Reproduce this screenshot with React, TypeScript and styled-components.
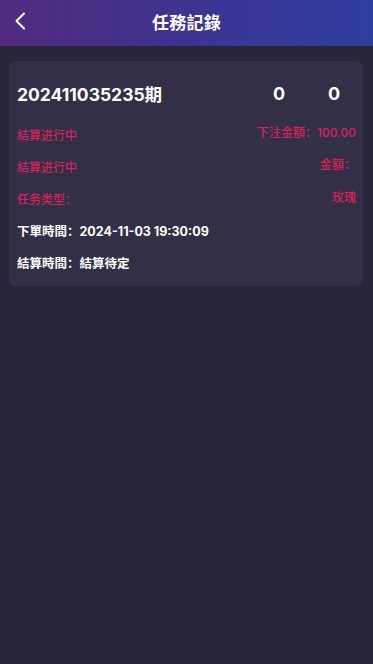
import React from "react";
import styled, { createGlobalStyle } from "styled-components";

const Global = createGlobalStyle`
  html, body { margin: 0; padding: 0; background: #29253a; }
  body { font-family: Inter, "Noto Sans CJK SC", sans-serif; -webkit-font-smoothing: antialiased; }
  #root { min-height: 664px; background: #29253a; }
`;

const Page = styled.div`
  min-height: 664px;
  background: #29253a;
  display: flex;
  flex-direction: column;
`;

const Header = styled.header`
  height: 46px;
  background: linear-gradient(90deg, #532b7e 0%, #3d3490 50%, #2e3ea0 100%);
  display: flex;
  align-items: center;
  justify-content: center;
  position: relative;
`;

const Back = styled.button`
  position: absolute;
  left: 10px;
  top: 10px;
  width: 20px;
  height: 22px;
  border: 0;
  padding: 0;
  background: transparent;
  display: flex;
  align-items: center;
  justify-content: center;
`;

const Title = styled.h1`
  margin: 0;
  margin-top: -4px;
  color: #fff;
  font-size: 17px;
  font-weight: 700;
  letter-spacing: 0.2px;
`;

const Content = styled.main`
  padding: 15px 10px 0 9px;
`;

const Card = styled.section`
  background: #332f47;
  border-radius: 6px;
  padding: 20px 7px 8px 8px;
  display: flex;
  flex-direction: column;
`;

const TitleRow = styled.div`
  display: flex;
  align-items: center;
  height: 24px;
  margin-bottom: 13px;
`;

const Period = styled.div`
  flex: 1;
  color: #fff;
  font-size: 17.5px;
  font-weight: 700;
`;

const Score = styled.div`
  width: 44px;
  text-align: center;
  color: #fff;
  font-size: 18px;
  font-weight: 700;
  & + & { margin-left: 11px; }
`;

const Row = styled.div`
  display: flex;
  align-items: center;
  justify-content: space-between;
  height: 32px;
`;

const Pink = styled.span<{ $up?: number }>`
  color: #d6235e;
  font-size: 12px;
  font-weight: 500;
  position: relative;
  top: ${(p) => (p.$up ? -p.$up : 0)}px;
`;

const Info = styled.span`
  color: #fff;
  font-size: 12.5px;
  font-weight: 700;
`;

export default function App() {
  return (
    <Page>
      <Global />
      <Header>
        <Back aria-label="back">
          <svg width="12" height="18" viewBox="0 0 12 18" fill="none">
            <path d="M10 1.5 L2.5 9 L10 16.5" stroke="#fff" strokeWidth="2" strokeLinecap="round" strokeLinejoin="round" />
          </svg>
        </Back>
        <Title>任務記錄</Title>
      </Header>
      <Content>
        <Card>
          <TitleRow>
            <Period>202411035235期</Period>
            <Score>0</Score>
            <Score>0</Score>
          </TitleRow>
          <Row>
            <Pink>結算进行中</Pink>
            <Pink $up={3}>下注金額：100.00</Pink>
          </Row>
          <Row>
            <Pink>結算进行中</Pink>
            <Pink $up={3}>金額：</Pink>
          </Row>
          <Row>
            <Pink>任务类型：</Pink>
            <Pink $up={2}>玫瑰</Pink>
          </Row>
          <Row>
            <Info>下單時間：2024-11-03 19:30:09</Info>
          </Row>
          <Row>
            <Info>結算時間：結算待定</Info>
          </Row>
        </Card>
      </Content>
    </Page>
  );
}
